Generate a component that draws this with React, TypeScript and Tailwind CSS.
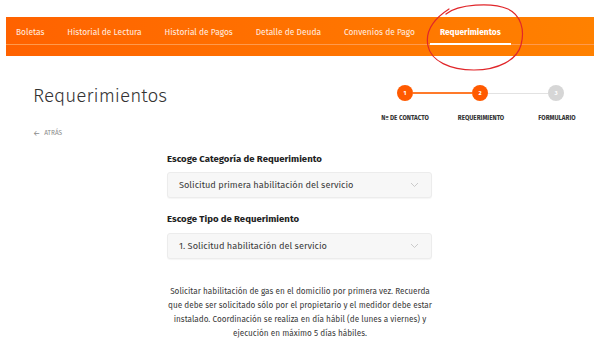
import React from 'react'

const navItems = [
    'Boletas',
    'Historial de Lectura',
    'Historial de Pagos',
    'Detalle de Deuda',
    'Convenios de Pago',
    'Requerimientos',
]

const steps = [
    { n: '1', label: 'Nº DE CONTACTO', done: true },
    { n: '2', label: 'REQUERIMIENTO', done: true },
    { n: '3', label: 'FORMULARIO', done: false },
]

function Chevron() {
    return (
        <svg width="9" height="6" viewBox="0 0 9 6" fill="none">
            <path d="M1 1l3.5 3.5L8 1" stroke="#c4c4c4" strokeWidth="0.9" />
        </svg>
    )
}

function SelectBox({ value }: { value: string }) {
    return (
        <div className="flex h-[26px] items-center justify-between rounded-[3px] border border-[#ececec] bg-[#f7f7f7] pl-[11px] pr-[12px] text-[9.2px] text-[#3a3a3a] shadow-[0_1px_1px_rgba(0,0,0,0.04)]">
            <span>{value}</span>
            <Chevron />
        </div>
    )
}

export default function App() {
    return (
        <div className="relative h-[344px] w-[600px] overflow-hidden bg-white" style={{ fontFamily: '"Fira Sans", "Roboto", "Noto Sans", sans-serif' }}>
            {/* top nav */}
            <div className="mx-[6px] mt-[17px] h-[39px] bg-gradient-to-r from-[#ff6200] to-[#ff8100]">
                <div className="flex h-[28px] gap-[23px] border-b border-[#ff9a4d] pl-[10px] pt-[4px] text-[8.4px] text-[#ffeee2]">
                    {navItems.map((item, i) => {
                        const active = i === navItems.length - 1
                        return (
                            <div
                                key={item}
                                className={
                                    active
                                        ? 'relative -ml-[8px] flex items-center px-[10px] font-bold text-white'
                                        : 'flex items-center'
                                }
                            >
                                {item}
                                {active && <div className="absolute bottom-[-1px] left-0 right-0 h-[2px] bg-white" />}
                            </div>
                        )
                    })}
                </div>
            </div>

            {/* title + stepper */}
            <div className="flex">
                <div className="pl-[33px]">
                    <h1 className="mt-[30px] text-[19px] font-light leading-none text-[#333]">Requerimientos</h1>
                    <div className="mt-[24px] flex items-center gap-[4px] text-[6.5px] text-[#8a8a8a]">
                        <span className="text-[8px] leading-none">←</span>
                        <span>ATRÁS</span>
                    </div>
                </div>
                <div className="ml-auto mr-[5px] mt-[29px] w-[228px]">
                    <div className="flex items-center pl-[30px]">
                        {steps.map((s, i) => (
                            <React.Fragment key={s.n}>
                                <div
                                    className={
                                        s.done
                                            ? 'flex h-[16px] w-[16px] items-center justify-center rounded-full bg-[#ff5a00] text-[6px] font-bold text-white'
                                            : 'flex h-[16px] w-[16px] items-center justify-center rounded-full bg-[#d6d6d6] text-[6px] font-bold text-white'
                                    }
                                >
                                    {s.n}
                                </div>
                                {i < steps.length - 1 && (
                                    <div className={i === 0 ? 'h-[1.5px] w-[59px] bg-[#ff7a2a]' : 'h-[1px] w-[60px] bg-[#e2e2e2]'} />
                                )}
                            </React.Fragment>
                        ))}
                    </div>
                    <div className="mt-[13px] grid grid-cols-3 text-center text-[6.3px] font-bold text-[#333]">
                        {steps.map(s => (
                            <span key={s.n}>{s.label}</span>
                        ))}
                    </div>
                </div>
            </div>

            {/* form */}
            <div className="ml-[167px] mt-[13px] w-[265px]">
                <div className="text-[9.6px] font-bold text-[#222]">Escoge Categoría de Requerimiento</div>
                <div className="mt-[6px]">
                    <SelectBox value="Solicitud primera habilitación del servicio" />
                </div>
                <div className="mt-[14px] text-[9.6px] font-bold text-[#222]">Escoge Tipo de Requerimiento</div>
                <div className="mt-[6px]">
                    <SelectBox value="1. Solicitud habilitación del servicio" />
                </div>
            </div>

            <p className="mx-auto mt-[25px] w-[268px] text-center text-[8.2px] leading-[14px] text-[#3a3a3a]">
                Solicitar habilitación de gas en el domicilio por primera vez. Recuerda que debe ser solicitado sólo por el propietario y el medidor debe estar instalado. Coordinación se realiza en día hábil (de lunes a viernes) y ejecución en máximo 5 días hábiles.
            </p>

            {/* hand-drawn annotation */}
            <svg className="pointer-events-none absolute left-0 top-0" width="600" height="344" fill="none">
                <path
                    d="M446 14 C458 4 492 2 508 9 C521 15 525 30 521 45 C517 60 498 70 474 70 C450 70 431 61 428 46 C425 32 432 20 449 9"
                    stroke="#e0262a"
                    strokeWidth="1.2"
                    strokeLinecap="round"
                />
            </svg>
        </div>
    )
}
